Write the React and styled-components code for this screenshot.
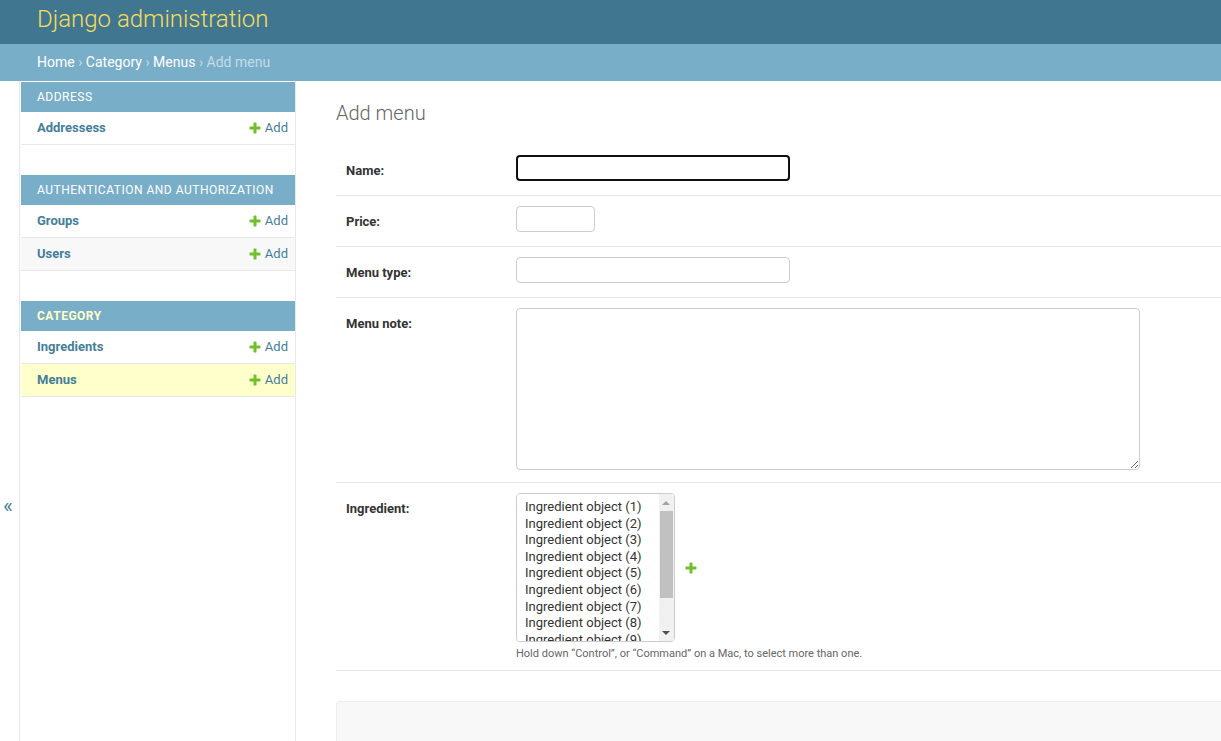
import React from "react";
import styled, { createGlobalStyle } from "styled-components";

const GlobalStyle = createGlobalStyle`
  html, body {
    margin: 0;
    padding: 0;
    overflow: hidden;
  }
  body {
    font-family: Roboto, "Lucida Grande", "DejaVu Sans", "Liberation Sans", sans-serif;
    font-size: 14px;
    color: #333;
    background: #fff;
  }
  * {
    box-sizing: border-box;
  }
`;

const Header = styled.div`
  background: #417690;
  height: 44px;
  padding: 5px 37px 0;
`;

const Branding = styled.h1`
  margin: 0;
  font-size: 24px;
  line-height: 28px;
  font-weight: 300;
  color: #f5dd5d;
`;

const Breadcrumbs = styled.div`
  background: #79aec8;
  height: 37px;
  padding: 10px 37px;
  color: #c4dce8;
  font-size: 14px;
  line-height: 17px;
`;

const Crumb = styled.a`
  color: #fff;
  text-decoration: none;
`;

const Main = styled.div`
  display: flex;
  min-height: calc(100vh - 81px);
`;

const ToggleButton = styled.button`
  flex: 0 0 20px;
  width: 20px;
  border: 0;
  border-right: 1px solid #e8e8e8;
  background: #fff;
  color: #447e9b;
  font-size: 21px;
  font-family: inherit;
  padding: 413px 3px 0 0;
  display: flex;
  justify-content: center;
  align-items: flex-start;
  line-height: 24px;
  cursor: pointer;
`;

const Sidebar = styled.nav`
  flex: 0 0 276px;
  border-right: 1px solid #e8e8e8;
  padding: 1px 0 0 1px;
`;

const Module = styled.div`
  margin-bottom: 30px;
`;

const Caption = styled.div`
  height: 30px;
  padding: 8px 16px;
  background: #79aec8;
  color: ${(p) => (p.current ? "#ffc" : "#fff")};
  font-size: 12px;
  line-height: 15px;
  letter-spacing: 0.5px;
  white-space: nowrap;
  text-transform: uppercase;
  font-weight: ${(p) => (p.current ? 700 : 400)};
`;

const ModelRow = styled.div`
  display: flex;
  justify-content: space-between;
  align-items: center;
  height: 33px;
  padding: 0 7px 1px 16px;
  border-bottom: 1px solid #e8e8e8;
  background: ${(p) => (p.current ? "#ffc" : p.even ? "#f8f8f8" : "#fff")};
  font-size: 13px;
`;

const ModelLink = styled.a`
  color: #447e9b;
  font-weight: 700;
  text-decoration: none;
`;

const AddLink = styled.a`
  display: flex;
  align-items: center;
  gap: 3px;
  color: #447e9b;
  text-decoration: none;
`;

const Content = styled.div`
  flex: 1;
  padding: 20px 0 20px 40px;
`;

const Title = styled.h1`
  margin: 0 0 20px;
  font-size: 20px;
  line-height: 24px;
  font-weight: 300;
  color: #666;
`;

const Fieldset = styled.fieldset`
  border: 0;
  margin: 0 0 30px;
  padding: 0;
`;

const FormRow = styled.div`
  display: flex;
  align-items: flex-start;
  min-height: 51px;
  padding: 10px;
  border-bottom: 1px solid #e8e8e8;
`;

const Label = styled.label`
  flex: 0 0 170px;
  padding: 8px 10px 0 0;
  font-size: 13px;
  line-height: 16px;
  font-weight: 700;
  color: #333;
`;

const Field = styled.div`
  display: flex;
  flex-direction: column;
`;

const TextInput = styled.input`
  width: ${(p) => p.w}px;
  height: 26px;
  padding: 5px 6px;
  border: ${(p) => (p.focused ? "2px solid #101010" : "1px solid #ccc")};
  border-radius: 4px;
  font-family: inherit;
  font-size: 13px;
  color: #333;
  outline: none;
`;

const TextArea = styled.textarea`
  display: block;
  width: 624px;
  height: 162px;
  margin-bottom: 2px;
  padding: 5px 6px;
  border: 1px solid #ccc;
  border-radius: 4px;
  font-family: inherit;
  font-size: 13px;
  resize: both;
`;

const RelatedWrapper = styled.div`
  display: flex;
  align-items: center;
  gap: 9px;
`;

const SelectBox = styled.div`
  position: relative;
  display: flex;
`;

const MultiSelect = styled.select`
  width: 159px;
  height: 149px;
  padding: 5px 16px 4px 6px;
  border: 1px solid #ccc;
  border-radius: 4px;
  font-family: inherit;
  font-size: 13px;
  color: #333;
  background: #fff;
  outline: none;

  option {
    padding: 0 2px 1.6px;
  }
`;

const ScrollTrack = styled.div`
  position: absolute;
  top: 1px;
  right: 1px;
  bottom: 1px;
  width: 15px;
  background: #f1f1f1;
  border-radius: 0 3px 3px 0;
  pointer-events: none;
`;

const ScrollThumb = styled.div`
  position: absolute;
  top: 17px;
  left: 1px;
  right: 1px;
  height: 87px;
  background: #c1c1c1;
`;

const ScrollArrow = styled.span`
  position: absolute;
  left: 3px;
  ${(p) => (p.down ? "bottom: 6px;" : "top: 7px;")}
  width: 0;
  height: 0;
  border-left: 4px solid transparent;
  border-right: 4px solid transparent;
  ${(p) =>
    p.down
      ? "border-top: 4px solid #505050;"
      : "border-bottom: 4px solid #a3a3a3;"}
`;

const Help = styled.p`
  margin: 5px 0 0;
  font-size: 11px;
  line-height: 13px;
  color: #666;
`;

const SubmitRow = styled.div`
  height: 62px;
  background: #f8f8f8;
  border: 1px solid #eee;
  border-right: 0;
  border-radius: 4px 0 0 4px;
`;

const PlusIcon = ({ size = 14 }) => (
  <svg width={size} height={size} viewBox="0 0 1792 1792">
    <path
      fill="#70bf2b"
      d="M1600 796v192q0 40-28 68t-68 28h-416v416q0 40-28 68t-68 28h-192q-40 0-68-28t-28-68v-416h-416q-40 0-68-28t-28-68v-192q0-40 28-68t68-28h416v-416q0-40 28-68t68-28h192q40 0 68 28t28 68v416h416q40 0 68 28t28 68z"
    />
  </svg>
);

const apps = [
  { name: "Address", models: ["Addressess"] },
  { name: "Authentication and Authorization", models: ["Groups", "Users"] },
  { name: "Category", models: ["Ingredients", "Menus"], current: "Menus" },
];

const ingredients = Array.from({ length: 12 }, (_, i) => i + 1);

const App = () => {
  return (
    <>
      <GlobalStyle />
      <Header>
        <Branding>Django administration</Branding>
      </Header>
      <Breadcrumbs>
        <Crumb href="#">Home</Crumb> › <Crumb href="#">Category</Crumb> ›{" "}
        <Crumb href="#">Menus</Crumb> › Add menu
      </Breadcrumbs>
      <Main>
        <ToggleButton>«</ToggleButton>
        <Sidebar>
          {apps.map((app) => (
            <Module key={app.name}>
              <Caption current={!!app.current}>{app.name}</Caption>
              {app.models.map((model, i) => (
                <ModelRow
                  key={model}
                  even={i % 2 === 1}
                  current={app.current === model}
                >
                  <ModelLink href="#">{model}</ModelLink>
                  <AddLink href="#">
                    <PlusIcon />
                    Add
                  </AddLink>
                </ModelRow>
              ))}
            </Module>
          ))}
        </Sidebar>
        <Content>
          <Title>Add menu</Title>
          <form>
            <Fieldset>
              <FormRow>
                <Label>Name:</Label>
                <TextInput w={274} focused />
              </FormRow>
              <FormRow>
                <Label>Price:</Label>
                <TextInput w={79} />
              </FormRow>
              <FormRow>
                <Label>Menu type:</Label>
                <TextInput w={274} />
              </FormRow>
              <FormRow>
                <Label>Menu note:</Label>
                <TextArea />
              </FormRow>
              <FormRow>
                <Label>Ingredient:</Label>
                <Field>
                  <RelatedWrapper>
                    <SelectBox>
                      <MultiSelect multiple>
                        {ingredients.map((n) => (
                          <option key={n} value={n}>
                            Ingredient object ({n})
                          </option>
                        ))}
                      </MultiSelect>
                      <ScrollTrack>
                        <ScrollArrow />
                        <ScrollThumb />
                        <ScrollArrow down />
                      </ScrollTrack>
                    </SelectBox>
                    <PlusIcon />
                  </RelatedWrapper>
                  <Help>
                    Hold down “Control”, or “Command” on a Mac, to select more
                    than one.
                  </Help>
                </Field>
              </FormRow>
            </Fieldset>
            <SubmitRow />
          </form>
        </Content>
      </Main>
    </>
  );
};

export default App;
